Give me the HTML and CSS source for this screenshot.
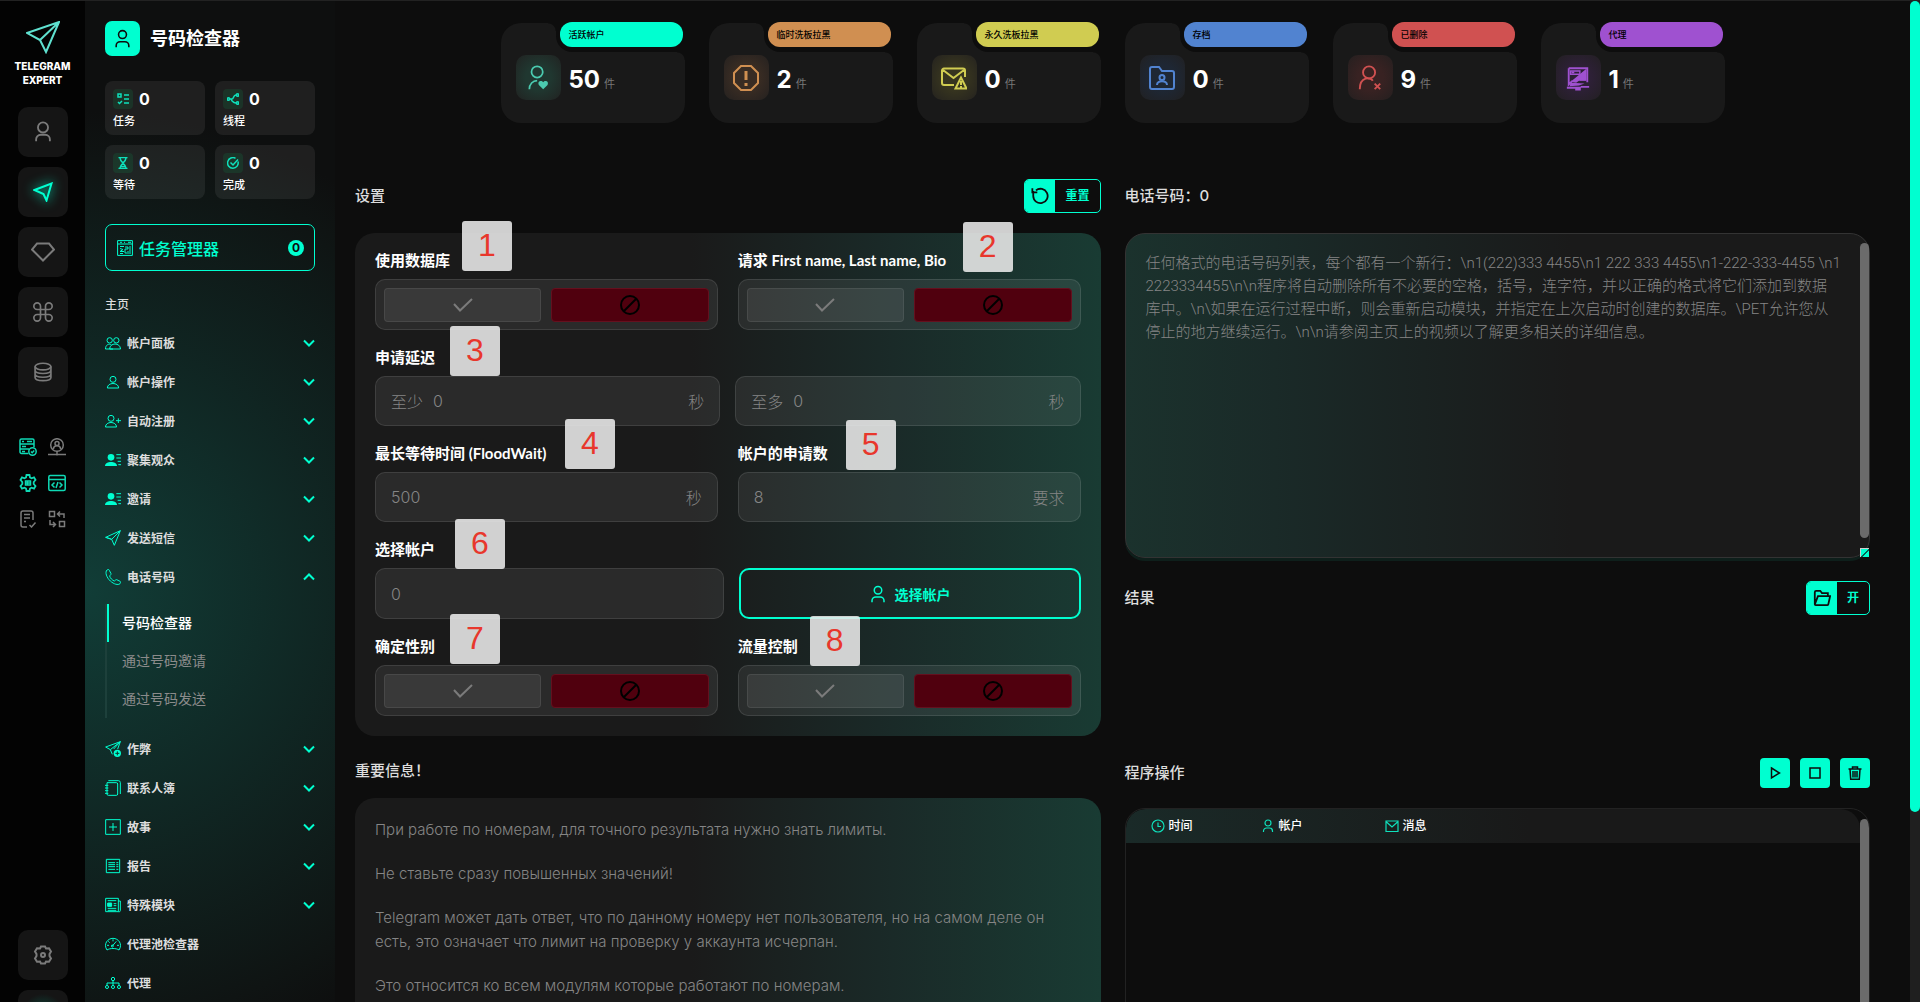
FILE: index.html
```html
<!DOCTYPE html>
<html lang="zh-CN">
<head>
    <meta charset="UTF-8">
    <meta name="viewport" content="width=device-width, initial-scale=1.0">
    <title>Telegram Expert</title>
    <link rel="stylesheet" href="styles.css">
</head>
<body>
    <!-- Shared icons -->
    <svg class="sprite" aria-hidden="true">
        <symbol id="user" viewBox="0 0 24 24"><circle cx="12" cy="7" r="5"/><path d="M4 23v-2a5 5 0 0 1 5-5h6a5 5 0 0 1 5 5v2"/></symbol>
        <symbol id="chevron" viewBox="0 0 12 8"><path d="M1 1.500l5 5 5-5"/></symbol>
        <symbol id="plane" viewBox="0 0 24 24"><path d="M1 11L23 1 14 23l-4-9zM10 14L23 1M10 14L1 11"/></symbol>
        <symbol id="check" viewBox="0 0 20 14"><path d="M1 6l6 6.500L19 1"/></symbol>
        <symbol id="ban" viewBox="0 0 20 20"><circle cx="10" cy="10" r="9"/><path d="M4 16L16 4"/></symbol>
        <symbol id="contact" viewBox="0 0 24 20"><circle cx="9" cy="6" r="5" fill="currentColor" stroke="none"/><path d="M0 19c0-8 18-8 18 0z" fill="currentColor" stroke="none"/><path d="M17 2h7M17 7h7M19 12h5M20 17h4"/></symbol>
    </svg>

    <div class="app">
        <nav class="rail">
            <a class="logo" href="#">
                <svg viewBox="0 0 34 33"><path d="M1 12L33 1 20 31l-6-12zM14 19L33 1M20 31L33 1"/></svg>
                <span>TELEGRAM<br>EXPERT</span>
            </a>
            <div class="rail-buttons">
                <button type="button" aria-label="帐户"><svg class="wide" viewBox="0 0 20 24"><circle cx="10" cy="7" r="5.500"/><path d="M2.500 22v-2a5 5 0 0 1 5-5h5a5 5 0 0 1 5 5v2"/></svg></button>
                <button type="button" class="active" aria-label="发送"><svg viewBox="0 0 20 20"><path d="M1.500 8L18.500 1.500 13.500 18.500 10.500 12z"/></svg></button>
                <button type="button" aria-label="高级"><svg class="wide" viewBox="0 0 24 20"><path d="M6 1.500h12L23 7.500 12 18.500 1 7.500z"/></svg></button>
                <button type="button" aria-label="命令"><svg viewBox="0 0 24 24"><path d="M9 9V5a4 4 0 1 0-4 4h14a4 4 0 1 0-4-4v14a4 4 0 1 0 4-4H5a4 4 0 1 0 4 4z"/></svg></button>
                <button type="button" aria-label="数据库"><svg viewBox="0 0 22 24"><ellipse cx="11" cy="5.500" rx="9.500" ry="4"/><path d="M1.500 5.500v13c0 5 19 5 19 0v-13M1.500 10c0 5 19 5 19 0M1.500 14.500c0 5 19 5 19 0"/></svg></button>
            </div>
            <div class="rail-status">
                <svg viewBox="0 0 18 18"><path d="M9.500 15.500H2.500a1.500 1.500 0 0 1-1.500-1.500V2.500A1.500 1.500 0 0 1 2.500 1h11A1.500 1.500 0 0 1 15 2.500V9M1 6h14M1 11h9M3 3.500h2M8 3.500h5M3 8.500h4M3 13.500h3"/><circle cx="13.500" cy="13.500" r="3.700"/><path d="M12 13.500l1.200 1.200 2-2.200"/></svg>
                <svg class="off" viewBox="0 0 18 18"><circle cx="9" cy="7" r="6.300"/><circle cx="9" cy="5.500" r="2"/><path d="M5.500 11c0-4.500 7-4.500 7 0M9 13v4.500M0 16.500h18"/></svg>
                <svg viewBox="0 0 18 18"><path d="M7 3.500L7.500 1h3l.5 2.500 1.500.8 2.500-.9 1.500 2.600L14.700 8v2l1.800 2-1.500 2.600-2.500-.9-1.500.8-.5 2.500h-3L7 14.500l-1.500-.8-2.500.9L1.500 12l1.800-2V8L1.500 6 3 3.400l2.500.9z" stroke-width="1.800"/><path d="M6.500 7h5v4h-5zM6.500 9h5M8.500 7v4"/></svg>
                <svg viewBox="0 0 18 18"><rect x=".8" y="1.500" width="16.400" height="15" rx="1.500"/><path d="M1 5.500h16M6.500 8.500L4 11l2.500 2.500M11.500 8.500L14 11l-2.500 2.500M10 8l-2 6"/></svg>
                <svg class="off" viewBox="0 0 18 18"><path d="M8 17H4a2 2 0 0 1-2-2V3a2 2 0 0 1 2-2h8a2 2 0 0 1 2 2v7M5 4.500h6M5 8h6M5 11.500h2M10.500 15l2 2 4-4.500"/></svg>
                <svg class="off" viewBox="0 0 18 18"><path d="M1.500 1.500h5v5h-5zM11.500 11.500h5v5h-5zM10 4h6v4M12 1.500L9.500 4 12 6.500M2 10v4.500h5M5 12l2.500 2.500L5 17"/></svg>
            </div>
            <div class="rail-bottom">
                <button type="button" aria-label="设置"><svg viewBox="0 0 20 20"><path d="M7 3.500L8 1.500h4l1 2 3-.3 2 3.300L16.500 9l0 2 1.500 2.500-2 3.300-3-.3-1 2H8l-1-2-3 .3-2-3.300L3.500 11V9L2 6.500l2-3.300z"/><circle cx="10" cy="10" r="2"/></svg></button>
                <button type="button" class="glow" aria-label="更多"></button>
            </div>
        </nav>

        <aside class="sidebar">
            <header class="module">
                <span class="module-icon"><svg><use href="#user"/></svg></span>
                <h1>号码检查器</h1>
            </header>
            <div class="stats">
                <div class="stat"><i><svg viewBox="0 0 12 12"><path d="M1 1h3v3H1zM7 2h5M7 6h5M7 10h5M1 9l1.500 1.500L5 8"/></svg></i><b>0</b><span>任务</span></div>
                <div class="stat"><i><svg viewBox="0 0 12 12"><circle cx="1.500" cy="6" r="1.200"/><circle cx="10.500" cy="2" r="1.200"/><circle cx="10.500" cy="10" r="1.200"/><path d="M3 6h2M9 2C6 2 7 6 5 6s1 4 4 4"/></svg></i><b>0</b><span>线程</span></div>
                <div class="stat"><i><svg viewBox="0 0 12 12"><path d="M1.500.6h9M1.500 11.400h9M3 1c0 4 6 6 6 10M9 1c0 4-6 6-6 10M4 9.500h4"/></svg></i><b>0</b><span>等待</span></div>
                <div class="stat"><i><svg viewBox="0 0 12 12"><path d="M11 4.500A5.300 5.300 0 1 1 8.500 1.300M3.500 5.500L6 8l5-5.500"/></svg></i><b>0</b><span>完成</span></div>
            </div>
            <button type="button" class="task-manager">
                <svg viewBox="0 0 16 16"><path d="M.6.6h14.800v14.800H.6zM.6 4h14.800M3 2.300h2M7 2.300h1M11 2.300h3M3 6.500h4M3 8.500l3 1-3 2h4M3 13.500h3M8 7h3v2H8v4h2M13 6v8M11 11v3"/></svg>
                <span>任务管理器</span><b>0</b>
            </button>

            <p class="menu-title">主页</p>
            <ul class="menu">
                <li><a href="#"><svg viewBox="0 0 24 20"><circle cx="7" cy="6" r="4"/><circle cx="17" cy="6" r="4"/><path d="M.7 19c0-6 5-9 9-6M12 19H.7M7 19c0-10 16-10 16.300 0z"/></svg>帐户面板<svg class="chev"><use href="#chevron"/></svg></a></li>
                <li><a href="#"><svg viewBox="0 0 24 20"><circle cx="12" cy="6" r="4.500"/><path d="M3.500 19c0-9 17-9 17 0z"/></svg>帐户操作<svg class="chev"><use href="#chevron"/></svg></a></li>
                <li><a href="#"><svg viewBox="0 0 24 20"><circle cx="9" cy="6" r="4.500"/><path d="M.7 19c0-9 16.600-9 16.600 0zM20 6v7M16.500 9.500H24"/></svg>自动注册<svg class="chev"><use href="#chevron"/></svg></a></li>
                <li><a href="#"><svg><use href="#contact"/></svg>聚集观众<svg class="chev"><use href="#chevron"/></svg></a></li>
                <li><a href="#"><svg><use href="#contact"/></svg>邀请<svg class="chev"><use href="#chevron"/></svg></a></li>
                <li><a href="#"><svg><use href="#plane"/></svg>发送短信<svg class="chev"><use href="#chevron"/></svg></a></li>
                <li>
                    <a href="#"><svg viewBox="0 0 24 24"><path d="M3 1.500C4.500.5 6 .5 6.500 2L9 7c.5 1.500-1.500 2-2 3.500.5 3 4 6.500 7 7.500 1.500-.5 2-2.500 3.500-2l5 2.500c1.500.5 1 2.500 0 3.500-3 2.500-9 1-14.500-4S-.5 5 3 1.500z"/></svg>电话号码<svg class="chev up"><use href="#chevron"/></svg></a>
                    <ul class="submenu">
                        <li><a class="current" href="#">号码检查器</a></li>
                        <li><a href="#">通过号码邀请</a></li>
                        <li><a href="#">通过号码发送</a></li>
                    </ul>
                </li>
                <li><a href="#"><svg viewBox="0 0 24 24"><path d="M13 12L23 1 19 12M1 9L23 1M1 9l7 4L23 1M8 13l3 7"/><circle cx="18.500" cy="18.500" r="5.500" fill="currentColor" stroke="none"/><path class="cut" d="M18.500 15.500v6M15.500 18.500h6"/></svg>作弊<svg class="chev"><use href="#chevron"/></svg></a></li>
                <li><a href="#"><svg viewBox="0 0 24 24"><path d="M3 4h14a2 2 0 0 1 2 2v15a2 2 0 0 1-2 2H5a2 2 0 0 1-2-2zM5 1h15a3 3 0 0 1 3 3v17M0 8h5M0 12h5M0 16h5M0 20h5"/></svg>联系人簿<svg class="chev"><use href="#chevron"/></svg></a></li>
                <li><a href="#"><svg viewBox="0 0 24 24"><path d="M1 1h22v22H1zM12 6v12M6 12h12"/></svg>故事<svg class="chev"><use href="#chevron"/></svg></a></li>
                <li><a href="#"><svg viewBox="0 0 24 24"><path d="M2 2h20v20H2zM5 7h10M17 7h3M5 10h10M17 10h3M5 13h10M17 13h3M5 17h10M17 17h3"/></svg>报告<svg class="chev"><use href="#chevron"/></svg></a></li>
                <li><a href="#"><svg viewBox="0 0 24 24"><path d="M1 2h19v20H1zM20 6h3v14a2 2 0 0 1-3 2M4 5.500h13M13 10h4M13 13h4M4 17h13M4 20h13"/><path d="M4 9h6v5H4z" fill="currentColor"/></svg>特殊模块<svg class="chev"><use href="#chevron"/></svg></a></li>
                <li><a href="#"><svg viewBox="0 0 24 20"><path d="M3 19C-3 10 4 1.500 12 1.500S27 10 21 19c-4-3-14-3-18 0zM11 13l6-7M12 3v3M5 6l2 2M3 12h3M18 12h3"/><circle cx="11" cy="13" r="1.500"/></svg>代理池检查器</a></li>
                <li><a href="#"><svg viewBox="0 0 24 20"><circle cx="12" cy="4" r="2.500"/><circle cx="3" cy="16" r="2.300"/><circle cx="12" cy="16" r="2.300"/><circle cx="21" cy="16" r="2.300"/><path d="M12 6.500V14M3 14v-4h18v4"/></svg>代理</a></li>
            </ul>
        </aside>

        <main class="content">
            <section class="cards">
                <div class="card teal">
                    <div class="tab"><span>活跃帐户</span></div>
                    <i><svg viewBox="0 0 26 30"><circle cx="12" cy="8" r="6.500"/><path d="M3 28c0-6 4-10 9-10"/><path d="M19 28l-5-5c-2-4 3-6 5-3 2-3 7-1 5 3z" fill="currentColor" stroke="none"/></svg></i>
                    <b>50</b><small>件</small>
                </div>
                <div class="card orange">
                    <div class="tab"><span>临时洗板拉黑</span></div>
                    <i><svg viewBox="0 0 26 26"><path d="M8 1h10l7 7v10l-7 7H8l-7-7V8z"/><path d="M13 6v9M13 18v3" stroke-width="3"/></svg></i>
                    <b>2</b><small>件</small>
                </div>
                <div class="card yellow">
                    <div class="tab"><span>永久洗板拉黑</span></div>
                    <i><svg viewBox="0 0 26 26"><path d="M13 20H3a2 2 0 0 1-2-2V5.500a2 2 0 0 1 2-2h19a2 2 0 0 1 2 2V12M2 5l10.500 8L23 5M20 12.500l5.500 11h-11zM20 16v4M20 21v1.500"/></svg></i>
                    <b>0</b><small>件</small>
                </div>
                <div class="card blue">
                    <div class="tab"><span>存档</span></div>
                    <i><svg viewBox="0 0 26 26"><path d="M1 22V4a2 2 0 0 1 2-2h7l3 4h10a2 2 0 0 1 2 2v14a2 2 0 0 1-2 2H3a2 2 0 0 1-2-2z"/><circle cx="13" cy="12.500" r="2.500"/><path d="M8 20c0-5 10-5 10 0"/></svg></i>
                    <b>0</b><small>件</small>
                </div>
                <div class="card red">
                    <div class="tab"><span>已删除</span></div>
                    <i><svg viewBox="0 0 26 28"><circle cx="12" cy="8" r="6.500"/><path d="M2 26c0-14 12-13 14-9M18 20l6 6M24 20l-6 6"/></svg></i>
                    <b>9</b><small>件</small>
                </div>
                <div class="card purple">
                    <div class="tab"><span>代理</span></div>
                    <i><svg viewBox="0 0 26 28"><path d="M3 3.500h20v15M3 3.500V21l4-4"/><path d="M22 4v13h-8l-3 2-6-1 5-4zM5 19l15 1-6 2-10 1z" fill="currentColor" stroke="none"/><path d="M5 6.500h10v3.500H5zM15 13h6v3h-6" stroke-width="1.500"/><path d="M6 8h3" stroke-width="2"/><path d="M1 24.500h9M16 23.500h9M11 24.500h4v2h-4z"/></svg></i>
                    <b>1</b><small>件</small>
                </div>
            </section>

            <div class="columns">
                <div class="column">
                    <div class="head">
                        <h2>设置</h2>
                        <button type="button" class="split"><i><svg viewBox="0 0 20 20"><path d="M2.500 4.500v5.500a8 8 0 1 0 3-6.300M1.500 1.500v4.500H7"/></svg></i><span>重置</span></button>
                    </div>
                    <form class="panel settings">
                        <div class="pair">
                            <fieldset class="field">
                                <legend>使用数据库</legend>
                                <div class="toggle">
                                    <button type="button" aria-label="是"><svg><use href="#check"/></svg></button>
                                    <button type="button" class="no" aria-label="否"><svg><use href="#ban"/></svg></button>
                                </div>
                                <span class="mark mark-1">1</span>
                            </fieldset>
                            <fieldset class="field">
                                <legend>请求 First name, Last name, Bio</legend>
                                <div class="toggle">
                                    <button type="button" aria-label="是"><svg><use href="#check"/></svg></button>
                                    <button type="button" class="no" aria-label="否"><svg><use href="#ban"/></svg></button>
                                </div>
                                <span class="mark mark-2">2</span>
                            </fieldset>
                        </div>
                        <fieldset class="field">
                            <legend>申请延迟</legend>
                            <div class="range">
                                <div class="box"><label for="delay-min">至少</label><input id="delay-min" type="text" value="0"><span>秒</span></div>
                                <div class="box"><label for="delay-max">至多</label><input id="delay-max" type="text" value="0"><span>秒</span></div>
                            </div>
                            <span class="mark mark-3">3</span>
                        </fieldset>
                        <div class="pair">
                            <div class="field">
                                <label class="name" for="flood">最长等待时间 (FloodWait)</label>
                                <div class="box"><input id="flood" type="text" value="500"><span>秒</span></div>
                                <span class="mark mark-4">4</span>
                            </div>
                            <div class="field">
                                <label class="name" for="requests">帐户的申请数</label>
                                <div class="box"><input id="requests" type="text" value="8"><span>要求</span></div>
                                <span class="mark mark-5">5</span>
                            </div>
                        </div>
                        <div class="field">
                            <label class="name" for="accounts">选择帐户</label>
                            <div class="accounts">
                                <div class="box"><input id="accounts" type="text" value="0"></div>
                                <button type="button" class="choose"><svg><use href="#user"/></svg>选择帐户</button>
                            </div>
                            <span class="mark mark-6">6</span>
                        </div>
                        <div class="pair">
                            <fieldset class="field">
                                <legend>确定性别</legend>
                                <div class="toggle">
                                    <button type="button" aria-label="是"><svg><use href="#check"/></svg></button>
                                    <button type="button" class="no" aria-label="否"><svg><use href="#ban"/></svg></button>
                                </div>
                                <span class="mark mark-7">7</span>
                            </fieldset>
                            <fieldset class="field">
                                <legend>流量控制</legend>
                                <div class="toggle">
                                    <button type="button" aria-label="是"><svg><use href="#check"/></svg></button>
                                    <button type="button" class="no" aria-label="否"><svg><use href="#ban"/></svg></button>
                                </div>
                                <span class="mark mark-8">8</span>
                            </fieldset>
                        </div>
                    </form>

                    <div class="head head-info"><h2>重要信息！</h2></div>
                    <div class="panel info">
                        <p>При работе по номерам, для точного результата нужно знать лимиты.</p>
                        <p>Не ставьте сразу повышенных значений!</p>
                        <p>Telegram может дать ответ, что по данному номеру нет пользователя, но на самом деле он есть, это означает что лимит на проверку у аккаунта исчерпан.</p>
                        <p>Это относится ко всем модулям которые работают по номерам.</p>
                    </div>
                </div>

                <div class="column">
                    <div class="head"><h2><label for="phones">电话号码：0</label></h2></div>
                    <div class="phones">
                        <textarea id="phones" placeholder="任何格式的电话号码列表，每个都有一个新行：\n1(222)333 4455\n1 222 333 4455\n1-222-333-4455 \n1&#10;2223334455\n\n程序将自动删除所有不必要的空格，括号，连字符，并以正确的格式将它们添加到数据&#10;库中。\n\如果在运行过程中断，则会重新启动模块，并指定在上次启动时创建的数据库。\PET允许您从&#10;停止的地方继续运行。\n\n请参阅主页上的视频以了解更多相关的详细信息。"></textarea>
                        <span class="thumb"></span>
                        <span class="grip"></span>
                    </div>
                    <div class="head">
                        <h2>结果</h2>
                        <button type="button" class="split"><i><svg viewBox="0 0 20 20"><path d="M2 17V3.500A1.500 1.500 0 0 1 3.500 2H8l2 2.500h6.500V8M2 17L5.500 8H19l-2 9a1 1 0 0 1-1 1H3a1 1 0 0 1-1-1z"/></svg></i><span>开</span></button>
                    </div>
                    <div class="result"></div>
                    <div class="head head-log">
                        <h2>程序操作</h2>
                        <div class="actions">
                            <button type="button" aria-label="开始"><svg viewBox="0 0 14 14"><path d="M3.500 2l8 5-8 5z"/></svg></button>
                            <button type="button" aria-label="停止"><svg viewBox="0 0 14 14"><path d="M2 2h10v10H2z"/></svg></button>
                            <button type="button" aria-label="清除"><svg viewBox="0 0 14 14"><path d="M.5 3h13M4.500 3V1h5v2M2 3l.7 10.300h8.600L12 3M5 5v6.500M7 5v6.500M9 5v6.500"/></svg></button>
                        </div>
                    </div>
                    <div class="log">
                        <table>
                            <thead>
                                <tr>
                                    <th class="col-time"><svg viewBox="0 0 14 14"><circle cx="7" cy="7" r="6"/><path d="M7 3.500V7.500h3"/></svg>时间</th>
                                    <th class="col-account"><svg viewBox="0 0 14 14"><circle cx="7" cy="4" r="3"/><path d="M2.500 13v-1a3 3 0 0 1 3-3h3a3 3 0 0 1 3 3v1"/></svg>帐户</th>
                                    <th><svg viewBox="0 0 14 14"><path d="M1 2h12v10.500H1zM1.500 3L7 8l5.500-5"/></svg>消息</th>
                                </tr>
                            </thead>
                        </table>
                        <span class="thumb"></span>
                    </div>
                </div>
            </div>
        </main>
        <div class="page-scroll"><span></span></div>
    </div>
</body>
</html>
```
FILE: styles.css
```css
* {
    box-sizing: border-box;
}
body {
    margin: 0;
    background-color: #0d0d0d;
    color: #fff;
    font-family: Inter, "Noto Sans CJK SC", sans-serif;
    font-size: 16px;
    overflow: hidden;
}
button, input, textarea {
    font: inherit;
    color: inherit;
    margin: 0;
    padding: 0;
    border: none;
    background: none;
    outline: none;
}
button {
    cursor: pointer;
}
a {
    color: inherit;
    text-decoration: none;
}
h1, h2, p, ul {
    margin: 0;
    padding: 0;
    list-style: none;
}
i {
    font-style: normal;
}
svg {
    fill: none;
    stroke: currentColor;
    stroke-width: 1.5;
    flex-shrink: 0;
}
.sprite {
    position: absolute;
    width: 0;
    height: 0;
}
.app {
    display: flex;
    height: 100vh;
    overflow: hidden;
    border-top: 1px solid #222;
}

/* Icon rail */
.rail {
    width: 85px;
    flex-shrink: 0;
    background-color: #030303;
    display: flex;
    flex-direction: column;
    align-items: center;
    padding-top: 20px;
}
.logo {
    display: flex;
    flex-direction: column;
    align-items: center;
    font-size: 10px;
    line-height: 14px;
    font-weight: 800;
    text-align: center;
}
.logo svg {
    width: 34px;
    height: 33px;
    stroke: #5fe0cf;
    stroke-width: 2;
    margin-bottom: 5px;
}
.rail-buttons, .rail-bottom {
    display: flex;
    flex-direction: column;
    gap: 10px;
}
.rail-buttons {
    margin-top: 20px;
}
.rail button {
    width: 50px;
    height: 50px;
    border-radius: 10px;
    background-color: #151515;
    color: #7b7b7b;
    display: flex;
    align-items: center;
    justify-content: center;
}
.rail button svg {
    width: 20px;
    height: 20px;
    stroke-width: 2;
}
.rail button svg.wide {
    width: 24px;
    height: 22px;
}
.rail button.active {
    color: #00ffd0;
}
.rail button.active svg {
    filter: drop-shadow(0 0 6px #00ffd0);
}
.rail button.glow {
    background: radial-gradient(circle, #0c4a3e, #151515 60%);
}
.rail-status {
    margin-top: 41px;
    display: grid;
    grid-template-columns: 18px 18px;
    gap: 18px 11px;
    color: #0fd9b5;
}
.rail-status svg {
    width: 18px;
    height: 18px;
}
.rail-status .off {
    color: #7b7b7b;
}
.rail-bottom {
    margin-top: auto;
    margin-bottom: -38px;
}

/* Sidebar */
.sidebar {
    width: 250px;
    flex-shrink: 0;
    padding: 20px;
    color: #ddd;
    background: radial-gradient(circle 480px at 0 590px, #113d37, #0f1413 90%, #0e0f0f);
}
.module {
    display: flex;
    align-items: center;
    gap: 10px;
}
.module-icon {
    width: 35px;
    height: 35px;
    border-radius: 7px;
    background-color: #00ffd0;
    color: #0d0d0d;
    display: flex;
    align-items: center;
    justify-content: center;
}
.module-icon svg {
    width: 19px;
    height: 19px;
    stroke-width: 2;
}
h1 {
    font-size: 18px;
    line-height: 20px;
    color: #fff;
}
.stats {
    display: grid;
    grid-template-columns: 1fr 1fr;
    gap: 10px;
    margin-top: 25px;
}
.stat {
    display: grid;
    grid-template-columns: 20px 1fr;
    gap: 4px 6px;
    align-items: center;
    align-content: start;
    height: 54px;
    padding: 8px;
    border-radius: 8px;
    background-color: rgba(255, 255, 255, 0.07);
    color: #fff;
}
.stat i {
    width: 20px;
    height: 20px;
    border-radius: 4px;
    background-color: rgba(0, 200, 100, 0.12);
    color: #0fe0bc;
    display: flex;
    align-items: center;
    justify-content: center;
}
.stat svg {
    width: 12px;
    height: 12px;
}
.stat b {
    font-size: 16px;
    line-height: 20px;
}
.stat span {
    grid-column: span 2;
    font-size: 11px;
    line-height: 16px;
    font-weight: 500;
}
.task-manager {
    display: flex;
    align-items: center;
    width: 100%;
    height: 47px;
    margin-top: 25px;
    padding: 0 10px 0 11px;
    border: 1px solid #00ffd0;
    border-radius: 7px;
    color: #00ffd0;
    font-weight: 500;
}
.task-manager svg {
    width: 16px;
    height: 16px;
    stroke-width: 1;
    margin-right: 6px;
}
.task-manager b {
    width: 16px;
    height: 16px;
    margin-left: auto;
    border-radius: 50%;
    background-color: #00ffd0;
    color: #0d0d0d;
    font-size: 12px;
    line-height: 16px;
}
.menu-title {
    margin: 24px 0 8px;
    font-size: 12px;
    line-height: 20px;
    font-weight: 500;
}
.menu > li > a {
    display: flex;
    align-items: center;
    gap: 6px;
    height: 39px;
    font-size: 12px;
    font-weight: 700;
}
.menu > li > a > svg {
    width: 16px;
    height: 16px;
    color: #00ffd0;
}
.menu a > svg.chev {
    width: 12px;
    height: 8px;
    margin-left: auto;
    stroke-width: 2;
}
.chev.up {
    transform: scaleY(-1);
}
.menu .cut {
    stroke: #10302b;
}
.submenu {
    margin: 8px 0 11px;
    border-left: 2px solid #1d403b;
}
.submenu a {
    display: block;
    height: 38px;
    padding-left: 15px;
    font-size: 14px;
    line-height: 38px;
    font-weight: 400;
    color: #8b8b8b;
}
.submenu a.current {
    padding-left: 13px;
    border-left: 2px solid #00ffd0;
    color: #fff;
    font-weight: 500;
}

/* Main area */
.content {
    flex: 1;
    min-width: 0;
    padding: 22px 40px 0 20px;
}
.cards {
    display: flex;
    justify-content: center;
    gap: 24px;
    margin-bottom: 56px;
}
.card {
    position: relative;
    display: flex;
    align-items: center;
    width: 184px;
    height: 100px;
    padding: 9px 15px 0;
    border-radius: 20px 10px 20px 20px;
    background-color: #191919;
}
.teal { --accent: #00ffd0; --tile: #203730; --ink: #4bcbb0; }
.orange { --accent: #d08f51; --tile: #392c23; --ink: #d08f51; }
.yellow { --accent: #d0cc51; --tile: #36341f; --ink: #d0cc51; }
.blue { --accent: #5183d0; --tile: #1e2734; --ink: #5183d0; }
.red { --accent: #d05151; --tile: #382222; --ink: #d05151; }
.purple { --accent: #9f51d0; --tile: #2d2036; --ink: #9f51d0; }
.tab {
    position: absolute;
    top: -1px;
    right: 0;
    width: 129px;
    height: 30px;
    padding: 0 2px 5px 4px;
    border-bottom-left-radius: 16px;
    background-color: #0d0d0d;
}
/* rounded card corners on both sides of the cut-out */
.tab::before, .tab::after {
    content: "";
    position: absolute;
    width: 8px;
    height: 8px;
}
.tab::before {
    top: 1px;
    left: -8px;
    background: radial-gradient(circle at 0 100%, transparent 7px, #0d0d0d 8px);
}
.tab::after {
    top: 30px;
    right: 0;
    background: radial-gradient(circle at 0 100%, transparent 7px, #0d0d0d 8px);
}
.tab span {
    display: block;
    height: 25px;
    padding-left: 9px;
    border-radius: 12px;
    background-color: var(--accent);
    color: #000;
    font-size: 9px;
    line-height: 25px;
    font-weight: 500;
}
.card i {
    display: flex;
    align-items: center;
    justify-content: center;
    width: 45px;
    height: 45px;
    margin-right: 8px;
    border-radius: 10px;
    background: radial-gradient(circle, var(--tile) 40%, #211f1f 110%);
    color: var(--ink);
}
.card svg {
    width: 26px;
    height: 26px;
    stroke-width: 2;
}
.card b {
    margin-top: 4px;
    font-size: 24px;
    line-height: 30px;
}
.card small {
    margin: 12px 0 0 4px;
    font-size: 11px;
    line-height: 16px;
    color: #777;
}
.columns {
    display: grid;
    grid-template-columns: 1fr 1fr;
    gap: 24px;
}
.head {
    display: flex;
    align-items: center;
    justify-content: space-between;
    height: 34px;
    margin-bottom: 20px;
}
.head-info {
    height: 30px;
    margin: 20px 0 12px;
}
.head-log {
    height: 30px;
}
h2 {
    font-size: 15px;
    line-height: 20px;
    font-weight: 500;
    color: #ddd;
}
.split {
    display: flex;
    height: 34px;
    border: 1px solid #00ffd0;
    border-radius: 5px;
    overflow: hidden;
    color: #00ffd0;
    font-size: 12px;
    font-weight: 700;
    line-height: 32px;
}
.split i {
    display: flex;
    align-items: center;
    justify-content: center;
    width: 30px;
    background-color: #00ffd0;
    color: #0d0d0d;
}
.split svg {
    width: 18px;
    height: 18px;
    stroke-width: 2;
}
.split span {
    padding: 0 10px;
}
.panel {
    border-radius: 20px;
    background: linear-gradient(90deg, #1a1a1a 45%, #1a2a28 72%, #193b33);
}
.settings {
    display: flex;
    flex-direction: column;
    gap: 17px;
    padding: 17px 20px 20px;
}
.pair {
    display: grid;
    grid-template-columns: 1fr 1fr;
    gap: 20px;
}
.field {
    position: relative;
    min-width: 0;
    margin: 0;
    padding: 0;
    border: none;
}
legend, .name {
    display: block;
    float: left;
    width: 100%;
    height: 20px;
    margin-bottom: 9px;
    padding: 0;
    font-family: Lato, "Noto Sans CJK SC", sans-serif;
    font-size: 15px;
    line-height: 20px;
    font-weight: 700;
    white-space: nowrap;
}
.toggle, .box {
    display: flex;
    align-items: center;
    border: 1px solid rgba(255, 255, 255, 0.1);
    border-radius: 10px;
    background-color: rgba(255, 255, 255, 0.07);
}
.toggle, .range, .accounts, .box {
    clear: both;
}
.toggle {
    gap: 10px;
    height: 51px;
    padding: 0 8px;
}
.toggle button {
    display: flex;
    align-items: center;
    justify-content: center;
    flex: 1;
    height: 34px;
    border: 1px solid rgba(255, 255, 255, 0.08);
    border-radius: 4px;
    background-color: rgba(255, 255, 255, 0.07);
    color: #7b7b7b;
}
.toggle svg {
    width: 20px;
    height: 14px;
    stroke-width: 2;
}
.toggle .no {
    border-color: #64101e;
    background-color: #50000e;
    color: #000;
}
.toggle .no svg {
    height: 20px;
}
.box {
    height: 50px;
    padding: 0 15px;
    color: #858585;
    font-weight: 300;
}
.box label {
    margin-right: 10px;
}
.box input {
    flex: 1;
    min-width: 0;
}
.range {
    display: flex;
    gap: 15px;
}
.range .box {
    flex: 1;
}
.accounts {
    display: grid;
    grid-template-columns: 51fr 50fr;
    gap: 15px;
}
.accounts .box {
    height: 51px;
}
.choose {
    display: flex;
    align-items: center;
    justify-content: center;
    gap: 8px;
    border: 2px solid #00ffd0;
    border-radius: 10px;
    color: #00ffd0;
    font-size: 14px;
    font-weight: 700;
}
.choose svg {
    width: 18px;
    height: 18px;
    stroke-width: 2;
}

/* Numbered callouts over the form */
.mark {
    position: absolute;
    z-index: 2;
    width: 50px;
    height: 50px;
    border-radius: 3px;
    background-color: rgba(235, 235, 235, 0.88);
    color: #e8372c;
    font-family: "Liberation Sans", Arial, sans-serif;
    font-size: 32px;
    line-height: 48px;
    text-align: center;
}
.mark-1 { left: 87px; top: -29px; }
.mark-2 { left: 225px; top: -28px; }
.mark-3 { left: 75px; top: -21px; }
.mark-4 { left: 190px; top: -24px; }
.mark-5 { left: 108px; top: -23px; }
.mark-6 { left: 80px; top: -20px; }
.mark-7 { left: 75px; top: -22px; }
.mark-8 { left: 72px; top: -20px; }

.info {
    padding: 20px;
    height: 400px;
    color: #858585;
    font-size: 15px;
    font-weight: 300;
}
.info p {
    margin-bottom: 20px;
    line-height: 24px;
}
.phones {
    position: relative;
    height: 325px;
    margin-bottom: 23px;
}
textarea {
    display: block;
    width: 100%;
    height: 100%;
    padding: 18px 12px 20px 20px;
    border: 1px solid #333;
    border-radius: 20px;
    background: linear-gradient(90deg, #1b322d, #1a2a28 20%, #1a1a1a 60%);
    box-shadow: 0 3px 0 #0e1f1b;
    font-family: Roboto, "Noto Sans CJK SC", sans-serif;
    font-size: 15px;
    line-height: 23px;
    font-weight: 300;
    resize: none;
    overflow: hidden;
}
textarea::placeholder {
    color: #858585;
    opacity: 1;
}
.thumb {
    position: absolute;
    top: 10px;
    right: 1px;
    width: 9px;
    height: 295px;
    border-radius: 5px;
    background-color: #6b6b6b;
}
.grip {
    position: absolute;
    right: 1px;
    bottom: 1px;
    width: 9px;
    height: 9px;
    border: solid #cfcfcf;
    border-width: 1px 0 0 1px;
    background: linear-gradient(135deg, #00ffd0 45%, #0b5c4e 45%, #0b5c4e 60%, #00ffd0 60%);
}
.result {
    height: 123px;
}
.actions {
    display: flex;
    gap: 10px;
}
.actions button {
    display: flex;
    align-items: center;
    justify-content: center;
    width: 30px;
    height: 30px;
    border-radius: 4px;
    background-color: #00ffd0;
    color: #0d0d0d;
}
.actions svg {
    width: 14px;
    height: 14px;
}
.log {
    position: relative;
    height: 500px;
    padding-right: 9px;
    border: 1px solid #222;
    border-radius: 20px;
    overflow: hidden;
}
.log .thumb {
    right: 0;
    height: 480px;
}
table {
    width: 100%;
    border-collapse: collapse;
    table-layout: fixed;
    border-radius: 20px 20px 0 0;
    overflow: hidden;
    background: linear-gradient(90deg, #1a2a28, #191919 55%);
}
th {
    height: 34px;
    padding: 0;
    text-align: left;
    font-size: 12px;
    line-height: 16px;
    font-weight: 500;
}
th svg {
    width: 14px;
    height: 14px;
    margin-right: 4px;
    vertical-align: -3px;
    color: #0fe0bc;
    stroke-width: 1.2;
}
.col-time {
    width: 135px;
    padding-left: 25px;
}
.col-account {
    width: 124px;
}
.page-scroll {
    width: 10px;
    flex-shrink: 0;
    background-color: #1f1f1f;
}
.page-scroll span {
    display: block;
    height: 81%;
    border-radius: 5px;
    background-color: #00ffd0;
}
```
